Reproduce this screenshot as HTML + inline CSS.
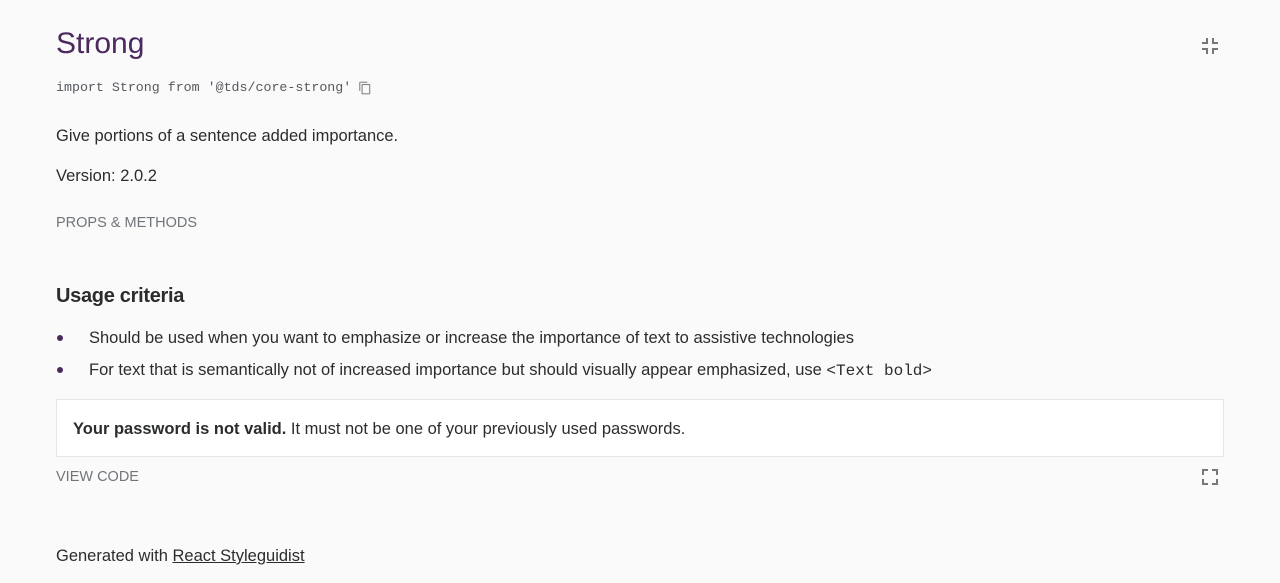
<!DOCTYPE html>
<html><head><style>
body{margin:0;background:#fafafa;font-family:"Liberation Sans",sans-serif;color:#2a2c2e;width:1280px;height:583px;overflow:hidden;position:relative}
.a{position:absolute;white-space:nowrap}
</style></head><body>
<div class="a" style="left:56px;top:27px;font-size:30px;color:#4b295f">Strong</div>
<div class="a" style="left:56px;top:80px;font-family:'Liberation Mono',monospace;font-size:13.3px;color:#54595f">import Strong from '@tds/core-strong'</div>
<svg class="a" style="left:358px;top:81px" width="14" height="14" viewBox="0 0 24 24"><path fill="#888" d="M16 1H4c-1.1 0-2 .9-2 2v14h2V3h12V1zm3 4H8c-1.1 0-2 .9-2 2v14c0 1.1.9 2 2 2h11c1.1 0 2-.9 2-2V7c0-1.1-.9-2-2-2zm0 16H8V7h11v14z"/></svg>
<svg class="a" style="left:1202px;top:38px" width="16" height="16" viewBox="0 0 16 16"><path fill="#777" d="M4 0h2v6H0V4h4zM10 0h2v4h4v2h-6zM0 10h6v6H4v-4H0zM10 10h6v2h-4v4h-2z"/></svg>
<div class="a" style="left:56px;top:127px;font-size:16.5px">Give portions of a sentence added importance.</div>
<div class="a" style="left:56px;top:167px;font-size:16.5px">Version: 2.0.2</div>
<div class="a" style="left:56px;top:215px;font-size:14.5px;color:#71757b">PROPS &amp; METHODS</div>
<div class="a" style="left:56px;top:285px;font-size:20px;font-weight:bold;letter-spacing:-0.3px">Usage criteria</div>
<div class="a" style="left:57px;top:335px;width:6px;height:6px;border-radius:3px;background:#4b295f"></div>
<div class="a" style="left:89px;top:329px;font-size:16.5px">Should be used when you want to emphasize or increase the importance of text to assistive technologies</div>
<div class="a" style="left:57px;top:367px;width:6px;height:6px;border-radius:3px;background:#4b295f"></div>
<div class="a" style="left:89px;top:361px;font-size:16.5px">For text that is semantically not of increased importance but should visually appear emphasized, use <span style="font-family:'Liberation Mono',monospace;font-size:16px">&lt;Text bold&gt;</span></div>
<div class="a" style="left:56px;top:399px;width:1166px;height:56px;border:1px solid #e6e6e6;border-radius:2px;background:#fff"></div>
<div class="a" style="left:73px;top:420px;font-size:16.5px"><b>Your password is not valid.</b> It must not be one of your previously used passwords.</div>
<div class="a" style="left:56px;top:469px;font-size:14.5px;color:#71757b">VIEW CODE</div>
<svg class="a" style="left:1202px;top:469px" width="16" height="16" viewBox="0 0 16 16"><path fill="#777" d="M0 0h6v2H2v4H0zM10 0h6v6h-2V2h-4zM0 10h2v4h4v2H0zM14 10h2v6h-6v-2h4z"/></svg>
<div class="a" style="left:56px;top:547px;font-size:16.5px">Generated with <span style="text-decoration:underline">React Styleguidist</span></div>
</body></html>
